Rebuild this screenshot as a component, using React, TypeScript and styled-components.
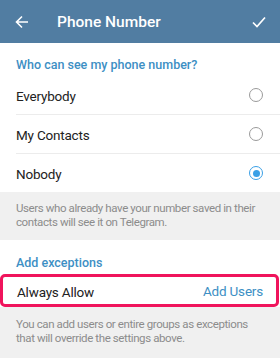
import { createGlobalStyle } from 'styled-components';
import styled from 'styled-components';

const GlobalStyle = createGlobalStyle`
  html, body {
    margin: 0;
    padding: 0;
    background: #f0f0f0;
    font-family: Roboto, 'Noto Sans', sans-serif;
  }
`;

const Page = styled.div`
  width: 280px;
  height: 358px;
  overflow: hidden;
  background: #f0f0f0;
`;

const Header = styled.div`
  height: 43px;
  background: #517da2;
  display: flex;
  align-items: center;
  padding: 0 14px 0 15px;
  color: #fff;
`;

const HeaderTitle = styled.span`
  flex: 1;
  margin-left: 28px;
  font-size: 15.5px;
  font-weight: 500;
`;

const IconBox = styled.span`
  display: flex;
  align-items: center;
`;

const Card = styled.div`
  background: #fff;
`;

const SectionTitle = styled.div<{ $top: number }>`
  padding: ${(p) => p.$top}px 16px 3px;
  font-size: 12.5px;
  line-height: 16px;
  font-weight: 500;
  color: #3d8fc4;
`;

const Row = styled.div<{ $last?: boolean }>`
  height: 38px;
  margin-left: 16px;
  padding-right: 17px;
  display: flex;
  align-items: center;
  justify-content: space-between;
  border-bottom: ${(p) => (p.$last ? 'none' : '1px solid #ececec')};
`;

const RowLabel = styled.span`
  font-size: 13.5px;
  letter-spacing: -0.2px;
  color: #222;
  padding-top: 2px;
`;

const Radio = styled.span<{ $checked?: boolean }>`
  width: 14px;
  height: 14px;
  box-sizing: border-box;
  border-radius: 50%;
  border: 1.5px solid ${(p) => (p.$checked ? '#3aa0e6' : '#9a9a9a')};
  display: flex;
  align-items: center;
  justify-content: center;
  &::after {
    content: '';
    display: ${(p) => (p.$checked ? 'block' : 'none')};
    width: 7px;
    height: 7px;
    border-radius: 50%;
    background: #3aa0e6;
  }
`;

const Info = styled.div<{ $top: number; $bottom: number }>`
  padding: ${(p) => p.$top}px 15px ${(p) => p.$bottom}px 16px;
  font-size: 11.5px;
  letter-spacing: -0.4px;
  line-height: 14px;
  color: #8c8c8c;
`;

const Highlight = styled.div`
  border: 3px solid #f0145c;
  border-radius: 5px;
  margin: 0 1px 0 0;
  height: 27px;
  display: flex;
  align-items: center;
  justify-content: space-between;
  padding: 0 13px 0 14px;
`;

const LinkText = styled.span`
  font-size: 13.5px;
  letter-spacing: -0.2px;
  color: #3d8fc4;
`;

const BackIcon = () => (
  <svg width="14" height="14" viewBox="0 0 14 14" fill="none" stroke="#fff" strokeWidth="1.6">
    <path d="M13 7H1.5M7 1.5L1.5 7L7 12.5" />
  </svg>
);

const CheckIcon = () => (
  <svg width="14" height="12" viewBox="0 0 14 12" fill="none" stroke="#fff" strokeWidth="1.7">
    <path d="M1 6.5L5 10.5L13 1.5" />
  </svg>
);

const options = [
  { label: 'Everybody', checked: false },
  { label: 'My Contacts', checked: false },
  { label: 'Nobody', checked: true },
];

const App = () => {
  return (
    <Page>
      <GlobalStyle />
      <Header>
        <IconBox>
          <BackIcon />
        </IconBox>
        <HeaderTitle>Phone Number</HeaderTitle>
        <IconBox>
          <CheckIcon />
        </IconBox>
      </Header>
      <Card>
        <SectionTitle $top={14}>Who can see my phone number?</SectionTitle>
        {options.map((o, i) => (
          <Row key={o.label} $last={i === options.length - 1}>
            <RowLabel>{o.label}</RowLabel>
            <Radio $checked={o.checked} />
          </Row>
        ))}
      </Card>
      <Info $top={9} $bottom={11}>
        Users who already have your number saved in their contacts will see it on Telegram.
      </Info>
      <Card>
        <SectionTitle $top={15}>Add exceptions</SectionTitle>
        <Highlight>
          <RowLabel>Always Allow</RowLabel>
          <LinkText>Add Users</LinkText>
        </Highlight>
      </Card>
      <Info $top={10} $bottom={10}>
        You can add users or entire groups as exceptions that will override the settings above.
      </Info>
    </Page>
  );
};

export default App;
